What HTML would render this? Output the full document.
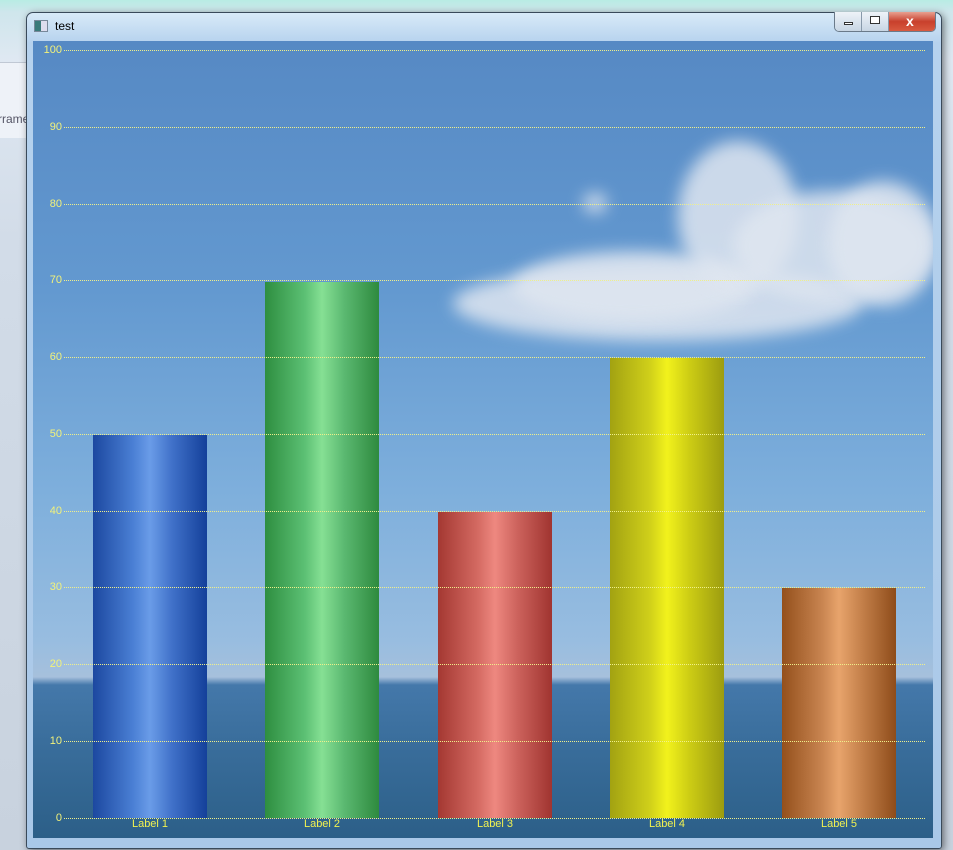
<!DOCTYPE html>
<html><head><style>
*{margin:0;padding:0;box-sizing:border-box}
body{width:953px;height:850px;overflow:hidden;position:relative;font-family:"Liberation Sans",Tahoma,sans-serif;background:linear-gradient(#b8ece4 0,#cfe6ec 12px,#dfe8f2 60px,#d2dce8 240px,#c8d2de 850px)}
.bg{position:absolute}
#win{position:absolute;left:26px;top:12px;width:916px;height:837px;border:1px solid #3a4a5a;border-radius:7px 7px 3px 3px;background:linear-gradient(#d8eaf8,#b6d2ee 30px,#a9c8e8);box-shadow:2px 2px 8px rgba(0,0,0,.5)}
#title{position:absolute;left:28px;top:6px;font-size:12px;color:#000}
#ico{position:absolute;left:7px;top:7px;width:14px;height:12px;border:1px solid #789;background:linear-gradient(90deg,#3a7a7a 50%,#dde 50%)}
.btns{position:absolute;right:5px;top:-1px;height:20px;display:flex;border:1px solid #6a7a8a;border-top:none;border-radius:0 0 5px 5px;overflow:hidden}
.b{width:27px;height:19px;background:linear-gradient(#eef3f8,#c8d6e4);border-right:1px solid #8899aa;position:relative}
.b.x{width:46px;background:linear-gradient(#e8a090,#c8402c 50%,#d85a40);border:none}
#chart{position:absolute;left:33px;top:41px;width:900px;height:797px;overflow:hidden;background:linear-gradient(#5689c4 0,#6399d0 250px,#7eafdc 450px,#98bde0 600px,#a6c0dc 636px,#4478aa 644px,#3a6e9c 700px,#2c5f88 797px)}
.cl{position:absolute;background:#dfe6f0;border-radius:50%;filter:blur(8px);opacity:.85}
.g{position:absolute;left:31px;width:861px;height:0;border-top:1px dotted #f0f08a}
.yl{position:absolute;width:29px;text-align:right;font-size:11px;color:#f2f27a;left:0}
.bar{position:absolute;width:114px;bottom:20px}
.xl{position:absolute;top:777px;width:114px;text-align:center;font-size:11px;color:#f2f250}
</style></head><body>
<div class="bg" style="left:0;top:62px;width:26px;height:76px;background:#eef2f8;border-top:1px solid #c0c8d4"></div>
<div class="bg" style="left:0;top:112px;font-size:12px;color:#556;left:-2px">rrame</div>
<div id="win">
<div id="ico"></div><div id="title">test</div>
<div class="btns"><div class="b"><div style="position:absolute;left:9px;top:10px;width:9px;height:3px;border:1px solid #333;background:#fff"></div></div><div class="b"><div style="position:absolute;left:8px;top:4px;width:10px;height:8px;border:1px solid #333;background:#fff"></div></div><div class="b x"><div style="position:absolute;left:17px;top:1px;color:#fff;font-weight:bold;font-size:14px">x</div></div></div>
</div>
<div id="chart">
<div class="cl" style="left:420px;top:225px;width:410px;height:75px"></div>
<div class="cl" style="left:480px;top:210px;width:240px;height:70px"></div>
<div class="cl" style="left:645px;top:100px;width:120px;height:150px"></div>
<div class="cl" style="left:700px;top:150px;width:200px;height:110px"></div>
<div class="cl" style="left:795px;top:140px;width:110px;height:125px"></div>
<div class="cl" style="left:550px;top:152px;width:24px;height:20px"></div>
<div class="bar" style="left:60px;height:383px;background:linear-gradient(90deg,#1c48a0,#4a7fd4 35%,#6a9ce8 50%,#3f70c8 70%,#14409a)"></div>
<div class="bar" style="left:232px;height:536px;background:linear-gradient(90deg,#2e8e40,#5cc074 35%,#86e094 50%,#5ab870 70%,#2e8a3e)"></div>
<div class="bar" style="left:405px;height:306px;background:linear-gradient(90deg,#a43832,#d46a62 35%,#ee8880 50%,#cc625c 70%,#a03430)"></div>
<div class="bar" style="left:577px;height:460px;background:linear-gradient(90deg,#a2a212,#d0d01a 35%,#f2f21c 50%,#cccc14 70%,#9c9c10)"></div>
<div class="bar" style="left:749px;height:230px;background:linear-gradient(90deg,#94501c,#c88450 35%,#e8a46c 50%,#c4804a 70%,#8e4c1a)"></div>
<div class="g" style="top:9px"></div><div class="yl" style="top:3px">100</div>
<div class="g" style="top:86px"></div><div class="yl" style="top:80px">90</div>
<div class="g" style="top:163px"></div><div class="yl" style="top:157px">80</div>
<div class="g" style="top:239px"></div><div class="yl" style="top:233px">70</div>
<div class="g" style="top:316px"></div><div class="yl" style="top:310px">60</div>
<div class="g" style="top:393px"></div><div class="yl" style="top:387px">50</div>
<div class="g" style="top:470px"></div><div class="yl" style="top:464px">40</div>
<div class="g" style="top:546px"></div><div class="yl" style="top:540px">30</div>
<div class="g" style="top:623px"></div><div class="yl" style="top:617px">20</div>
<div class="g" style="top:700px"></div><div class="yl" style="top:694px">10</div>
<div class="g" style="top:777px"></div><div class="yl" style="top:771px">0</div>
<div class="xl" style="left:60px">Label 1</div>
<div class="xl" style="left:232px">Label 2</div>
<div class="xl" style="left:405px">Label 3</div>
<div class="xl" style="left:577px">Label 4</div>
<div class="xl" style="left:749px">Label 5</div>
</div>
</body></html>
